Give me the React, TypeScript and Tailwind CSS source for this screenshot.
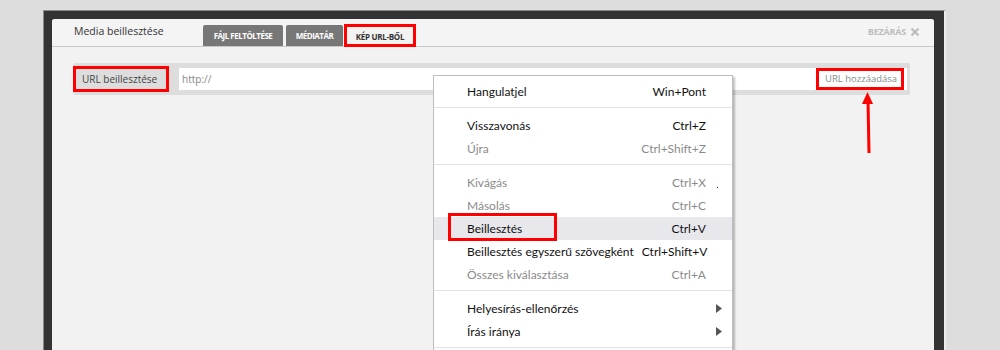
import React from 'react'

const MenuRow = ({
  label,
  keys,
  muted,
  active,
  sub,
}: {
  label: string
  keys?: string
  muted?: boolean
  active?: boolean
  sub?: boolean
}) => (
  <div
    className={`flex h-[23px] items-center justify-between gap-[8px] whitespace-nowrap pl-[33px] pr-[26px] ${active ? 'bg-[#e8e8ec]' : ''} ${muted ? 'text-[#8b8b8b]' : 'text-[#111]'}`}
  >
    <span>{label}</span>
    {keys && <span>{keys}</span>}
    {sub && (
      <svg width="6" height="9" viewBox="0 0 6 9" className="-mr-[16px]">
        <path d="M0 0 L6 4.5 L0 9 Z" fill="#555" />
      </svg>
    )}
  </div>
)

const Sep = () => <div className="mt-[4px] mb-[6px] h-px bg-[#e3e3e3]" />

export default function App() {
  return (
    <div className="relative h-[350px] w-[1000px] overflow-hidden bg-[#dddddd] pt-[10px] pl-[43px] font-['Open_Sans',sans-serif]">
      {/* dark frame */}
      <div className="h-[340px] w-[903px] border-t border-l border-[#8a8a8a] border-r-2 border-r-[#ececec] bg-[#333333] pt-[8px] pl-[8px] pr-[10px]">
        <div className="h-full w-[882px] overflow-hidden rounded-t-[3px] bg-[#f2f2f2]">
          {/* header */}
          <div className="flex h-[28px] items-end border-b border-[#c9c9c9] bg-[#f4f4f4] pl-[22px] pr-[14px]">
            <div className="w-[129px] self-center pb-[2px] text-[10.5px] text-[#333]">Media beillesztése</div>
            <div className="flex items-end gap-[3px]">
              <div className="flex h-[21px] w-[80px] items-center justify-center rounded-t-[2px] bg-[#777777] pt-px text-[8px] font-bold tracking-[-0.5px] text-white">
                FÁJL FELTÖLTÉSE
              </div>
              <div className="flex h-[21px] w-[57px] items-center justify-center rounded-t-[2px] bg-[#777777] pt-px text-[8px] font-bold tracking-[-0.5px] text-white">
                MÉDIATÁR
              </div>
              <div className="-mb-px -ml-[2px] flex h-[23px] w-[72px] items-center justify-center border-[3px] border-[#ff0000] bg-[#f2f2f2] pt-[2px] text-[8px] font-bold tracking-[-0.3px] text-[#333]">
                KÉP URL-BŐL
              </div>
            </div>
            <div className="ml-auto flex items-center gap-[4px] self-center pb-[1px] text-[9px] font-bold tracking-[-0.2px] text-[#bdbdbd]">
              BEZÁRÁS
              <svg width="10" height="10" viewBox="0 0 10 10">
                <path d="M1.5 1.5 L8.5 8.5 M8.5 1.5 L1.5 8.5" stroke="#bdbdbd" strokeWidth="2.2" />
              </svg>
            </div>
          </div>

          {/* url bar */}
          <div className="pt-[16px] pl-[21px] pr-[24px]">
            <div className="flex h-[32px] items-center rounded-[2px] bg-[#dddddd] pr-[3px]">
              <div className="flex h-[26px] w-[96px] items-center whitespace-nowrap border-[3px] border-[#ff0000] pl-[6px] text-[10px] text-[#444]">
                URL beillesztése
              </div>
              <div className="ml-[10px] flex h-[22px] flex-1 items-center justify-between bg-white pl-[3px] pr-[3px]">
                <span className="text-[10px] text-[#888]">http://</span>
                <div className="flex h-[22px] w-[88px] items-center border-[3px] border-[#ff0000] pl-[6px] text-[9.5px] text-[#8a8a8a]">
                  URL hozzáadása
                </div>
              </div>
            </div>
          </div>
        </div>
      </div>

      {/* context menu */}
      <div className="absolute top-[75px] left-[433px] h-[290px] w-[300px] border border-[#bdbdbd] bg-white pt-[4px] font-['Lato',sans-serif] text-[12px] shadow-[2px_2px_2px_rgba(0,0,0,0.25)]">
        <MenuRow label="Hangulatjel" keys="Win+Pont" />
        <Sep />
        <MenuRow label="Visszavonás" keys="Ctrl+Z" />
        <MenuRow label="Újra" keys="Ctrl+Shift+Z" muted />
        <Sep />
        <MenuRow label="Kivágás" keys="Ctrl+X" muted />
        <MenuRow label="Másolás" keys="Ctrl+C" muted />
        <MenuRow label="Beillesztés" keys="Ctrl+V" active />
        <MenuRow label="Beillesztés egyszerű szövegként" keys="Ctrl+Shift+V" />
        <MenuRow label="Összes kiválasztása" keys="Ctrl+A" muted />
        <Sep />
        <MenuRow label="Helyesírás-ellenőrzés" sub />
        <MenuRow label="Írás iránya" sub />
        <Sep />
      </div>

      {/* highlight box on Beillesztés */}
      <div className="absolute top-[213px] left-[448px] h-[28px] w-[109px] border-[3px] border-[#ff0000]" />
      <div className="absolute top-[187px] left-[717px] h-px w-px bg-[#b00]" />

      {/* red arrow */}
      <svg className="absolute top-[90px] left-[860px]" width="16" height="66" viewBox="0 0 16 66">
        <path d="M8 10 L9 63" stroke="#ff0000" strokeWidth="3" />
        <path d="M7.5 2 L13 14 L2 14 Z" fill="#ff0000" />
      </svg>
    </div>
  )
}
